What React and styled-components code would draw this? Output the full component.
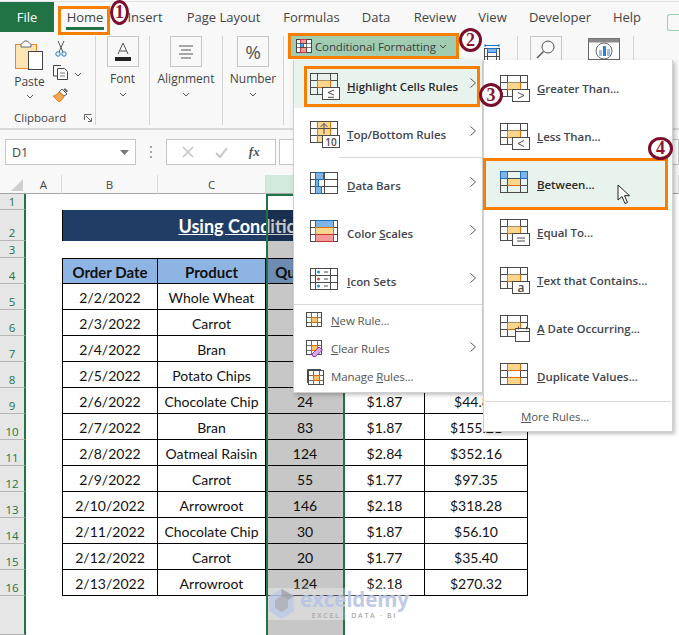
import React from 'react';
import styled, { createGlobalStyle } from 'styled-components';

const Global = createGlobalStyle`
  html, body { margin: 0; padding: 0; background: #fff; overflow: hidden; }
  body { font-family: "Open Sans", "Noto Sans", sans-serif; color: #444; }
`;

const Page = styled.div`
  position: relative;
  width: 679px;
  height: 635px;
  overflow: hidden;
  display: flex;
  flex-direction: column;
  background: #f8f8f8;
`;

/* ---- tabs ---- */
const TabBar = styled.div`
  height: 30px;
  border-top: 1px solid #e2e2e2;
  margin-top: 1px;
  display: flex;
  flex: none;
`;
const Tab = styled.div`
  position: relative;
  width: ${p => p.$w}px;
  font-size: 13px;
  display: flex;
  align-items: center;
  justify-content: center;
  color: #444;
  white-space: nowrap;
  ${p => p.$file && 'background:#217346;color:#fff;'}
  ${p => p.$active && `
    &::after {
      content: '';
      position: absolute;
      left: 12px;
      right: 12px;
      bottom: 2px;
      height: 3px;
      background: #217346;
    }
  `}
`;
const ShareStub = styled.div`
  width: 11px;
  height: 15px;
  margin: 12px 0 0 auto;
  border: 1px solid #9fcdb3;
  border-right: none;
  border-radius: 3px 0 0 3px;
`;

/* ---- ribbon ---- */
const Ribbon = styled.div`
  height: 98px;
  flex: none;
  display: flex;
  border-bottom: 2px solid #d9d9d9;
  box-sizing: border-box;
  padding-bottom: 3px;
`;
const Group = styled.div`
  width: ${p => p.$w}px;
  flex: none;
  box-sizing: border-box;
  margin-top: 4px;
  border-right: 1px solid #d4d4d4;
  display: flex;
  flex-direction: column;
  align-items: center;
  font-size: 12px;
  color: #444;
`;
const BoxIcon = styled.div`
  width: 32px;
  height: ${p => p.$h || 31}px;
  flex: none;
  box-sizing: border-box;
  border: 1px solid #c6c6c6;
  display: flex;
  align-items: center;
  justify-content: center;
  margin-bottom: 3px;
`;
const Percent = styled.span`
  font-size: 19px;
  color: #555;
`;
const Chevron = styled.svg`
  width: 8px;
  height: 5px;
  margin-top: ${p => (p.$flat ? 0 : 5)}px;
  flex: none;
`;
const ClipTop = styled.div`
  display: flex;
  width: 100%;
  padding: 4px 0 0 15px;
  box-sizing: border-box;
  gap: 8px;
`;
const PasteCol = styled.div`
  display: flex;
  flex-direction: column;
  align-items: center;
  width: 29px;
  font-size: 12px;
  line-height: 14px;
`;
const PasteLabel = styled.span`
  margin-top: 5px;
`;
const ClipTools = styled.div`
  display: flex;
  flex-direction: column;
  gap: 7px;
`;
const ToolRow = styled.div`
  display: flex;
  align-items: center;
  gap: 5px;
  padding-left: ${p => p.$indent || 0}px;
`;
const GroupLabel = styled.div`
  margin-top: 7px;
  width: 100%;
  display: flex;
  justify-content: space-between;
  align-items: center;
  box-sizing: border-box;
  padding: 0 3px 0 14px;
  font-size: 11.5px;
  line-height: 15px;
`;
const CondButton = styled.div`
  width: 170px;
  height: 20px;
  margin: 4px 0 0 5px;
  flex: none;
  background: #a0cdb2;
  display: flex;
  align-items: center;
  gap: 3px;
  padding-left: 7px;
  box-sizing: border-box;
  font-size: 11.5px;
  letter-spacing: -0.12px;
  white-space: nowrap;
  color: #3d3d3d;
`;
const RightTools = styled.div`
  flex: 1;
  display: flex;
  height: 88px;
  margin-top: 4px;
  padding-left: 25px;
`;
const SideTool = styled.div`
  width: ${p => p.$w}px;
  height: 88px;
  flex: none;
  box-sizing: border-box;
  border-right: 1px solid #d4d4d4;
  padding-top: ${p => p.$top}px;
  padding-left: ${p => p.$left}px;
  display: flex;
  align-items: flex-start;
  gap: 26px;
`;
const AnalyzeWrap = styled.div`
  margin-top: 2px;
  line-height: 0;
`;

/* ---- formula bar ---- */
const FormulaBar = styled.div`
  height: 45px;
  flex: none;
  box-sizing: border-box;
  padding-top: 9px;
  display: flex;
  align-items: flex-start;
  padding-left: 5px;
`;
const NameBox = styled.div`
  width: 131px;
  height: 26px;
  box-sizing: border-box;
  border: 1px solid #c6c6c6;
  background: #fff;
  display: flex;
  align-items: center;
  justify-content: space-between;
  padding: 0 6px;
  font-size: 12.5px;
`;
const Dots = styled.div`
  width: 30px;
  height: 26px;
  display: flex;
  flex-direction: column;
  align-items: center;
  justify-content: center;
  gap: 3px;
  & > i { width: 2px; height: 2px; background: #a8a8a8; display: block; }
`;
const FxBox = styled.div`
  width: 110px;
  height: 26px;
  box-sizing: border-box;
  border: 1px solid #c6c6c6;
  background: #fff;
  display: flex;
  align-items: center;
  justify-content: space-around;
  padding: 0 5px;
`;
const FxText = styled.span`
  font-family: "Liberation Serif", serif;
  font-style: italic;
  font-weight: 700;
  font-size: 13px;
  color: #555;
`;
const FormulaInput = styled.div`
  flex: 1;
  height: 26px;
  margin-left: 3px;
  box-sizing: border-box;
  border: 1px solid #c6c6c6;
  background: #fff;
`;

/* ---- sheet ---- */
const Sheet = styled.div`
  position: relative;
  flex: 1;
  display: grid;
  grid-template-columns: 26px 36px 96px 108px 79px 80px 103px 1fr;
  grid-template-rows: 19px 16px 31px 17px 26px repeat(12, 26px) 1fr;
  background: #fff;
  font-family: Lato, "Liberation Sans", sans-serif;
  font-size: 14px;
  color: #111;
`;
const Corner = styled.div`
  background: #f8f8f8;
  border-bottom: 1px solid #a6a6a6;
  position: relative;
  &::after {
    content: '';
    position: absolute;
    right: 3px;
    bottom: 2px;
    border-style: solid;
    border-width: 0 0 12px 12px;
    border-color: transparent transparent #cfcfcf transparent;
  }
`;
const ColHead = styled.div`
  background: ${p => (p.$on ? '#d2eadd' : '#f8f8f8')};
  border-right: 1px solid #d9d9d9;
  border-bottom: 1px solid #a6a6a6;
  display: flex;
  align-items: center;
  justify-content: center;
  font-family: "Open Sans", sans-serif;
  font-size: 11.5px;
  color: #444;
`;
const RowHead = styled.div`
  background: #e6e6e6;
  border-right: 2px solid #217346;
  border-bottom: 1px solid #b5b5b5;
  box-sizing: border-box;
  display: flex;
  align-items: flex-end;
  justify-content: center;
  font-family: "Open Sans", sans-serif;
  font-size: 11.5px;
  line-height: 15px;
  color: #217346;
`;
const Blank = styled.div``;
const TitleCell = styled.div`
  grid-column: 3 / 8;
  background: #203d66;
  border-left: 1px solid #000;
  color: #fff;
  font-size: 18px;
  font-weight: 700;
  text-decoration: underline;
  display: flex;
  align-items: center;
  justify-content: center;
  white-space: nowrap;
`;
const Cell = styled.div`
  box-sizing: border-box;
  border-right: 1px solid #000;
  border-bottom: 1px solid #000;
  padding-top: 1px;
  ${p => p.$first && 'border-left: 1px solid #000;'}
  ${p => p.$head && 'border-top: 1px solid #000; background:#8eb4e3; font-weight:700; font-size:15px;'}
  display: flex;
  align-items: center;
  justify-content: center;
  white-space: nowrap;
  overflow: hidden;
`;
const ColumnSelection = styled.div`
  position: absolute;
  left: 266px;
  width: 79px;
  top: 19px;
  bottom: 0;
  box-sizing: border-box;
  border: 2px solid #217346;
  border-bottom: none;
  &::after {
    content: '';
    position: absolute;
    left: 0;
    right: 0;
    top: 14px;
    bottom: 0;
    background: rgba(0, 0, 0, 0.22);
  }
`;
const Watermark = styled.div`
  position: absolute;
  left: 268px;
  top: 413px;
  width: 142px;
  height: 32px;
  background: rgba(255, 255, 255, 0.3);
  display: flex;
  gap: 5px;
`;
const MarkText = styled.div`
  display: flex;
  flex-direction: column;
  align-items: center;
  font-family: "Open Sans", sans-serif;
`;
const MarkName = styled.div`
  font-size: 20.5px;
  line-height: 23px;
  font-weight: 700;
  letter-spacing: -0.1px;
  color: #b7c5e6;
  opacity: 0.9;
`;
const MarkSub = styled.div`
  font-size: 7px;
  line-height: 9px;
  font-weight: 600;
  letter-spacing: 1.7px;
  color: #a9a9a9;
`;

/* ---- menus ---- */
const Menu = styled.div`
  position: absolute;
  left: ${p => p.$x}px;
  top: 60px;
  width: 190px;
  box-sizing: border-box;
  background: #fff;
  border: 1px solid #d0d0d0;
  border-top: none;
  box-shadow: 2px 2px 4px rgba(0, 0, 0, 0.25);
  padding: ${p => p.$pad}px 0 ${p => (p.$pad ? 1 : 2)}px;
  font-size: 11.5px;
  color: #444;
`;
const BigItem = styled.div`
  height: 48px;
  box-sizing: border-box;
  padding: ${p => (p.$sub ? 0 : 6)}px 0 0 16px;
  margin-right: ${p => (p.$sub ? 5 : 0)}px;
  display: flex;
  align-items: center;
  position: relative;
  font-weight: 600;
  letter-spacing: -0.05px;
  white-space: nowrap;
  color: #3f4650;
  background: ${p => (p.$on ? '#e9f3ee' : 'transparent')};
  ${p => p.$on && 'color:#2b2b2b;'}
  & > svg { flex: none; margin-right: 6px; }
  & > span { margin-top: -1px; }
`;
const SmallItem = styled.div`
  height: 28px;
  box-sizing: border-box;
  padding-left: 12px;
  display: flex;
  align-items: center;
  position: relative;
  white-space: nowrap;
  letter-spacing: -0.1px;
  color: #555;
  & > svg { flex: none; margin-right: 7px; }
`;
const Arrow = styled.svg`
  position: absolute;
  right: 6px;
  top: 50%;
  margin-top: -6px;
  width: 6px;
  height: 10px;
  &&& { margin-right: 0; }
`;
const Sep = styled.div`
  height: 1px;
  background: #d9d9d9;
  margin: ${p => p.$m || '0'};
`;
const MoreRules = styled.div`
  height: 28px;
  display: flex;
  align-items: center;
  padding-left: 37px;
  letter-spacing: -0.1px;
  color: #555;
`;
const Key = styled.span`
  text-decoration: underline;
`;

/* ---- annotations ---- */
const Callout = styled.div`
  position: absolute;
  left: ${p => p.$x}px;
  top: ${p => p.$y}px;
  width: ${p => p.$w}px;
  height: ${p => p.$h}px;
  box-sizing: border-box;
  border: 3px solid #f77f00;
  pointer-events: none;
`;
const Badge = styled.div`
  position: absolute;
  left: ${p => p.$x}px;
  top: ${p => p.$y}px;
  width: ${p => p.$w}px;
  height: ${p => p.$h}px;
  box-sizing: border-box;
  border-radius: 50%;
  border: 3px solid #7b0f2b;
  background: #fff;
  color: #8d1230;
  font-family: "Liberation Serif", serif;
  font-weight: 700;
  font-size: 18px;
  display: flex;
  align-items: center;
  justify-content: center;
`;
const Cursor = styled.svg`
  position: absolute;
  left: 617px;
  top: 184px;
`;

/* ---- icons ---- */
const INK = '#4a4a4a';
const OR = '#e26b0a';
const YL = '#fbd78d';
const BL = '#7fb5e6';
const BLD = '#1f6fc0';

const GridLines = ({ v = [7, 20], h = [7, 14] }) => (
  <>
    <rect x="0.5" y="0.5" width="27" height="21" fill="none" stroke={INK} />
    {v.map(x => <path key={x} d={`M${x + 0.5} 0.5V21.5`} stroke={INK} fill="none" />)}
    {h.map(y => <path key={y} d={`M0.5 ${y + 0.5}H27.5`} stroke={INK} fill="none" />)}
  </>
);

const HiliteCell = () => (
  <>
    <rect x="7.5" y="7.5" width="13" height="7" fill={YL} />
    <path d="M7.5 14.5H20.5V7.5" stroke={OR} fill="none" />
  </>
);

const SubBox = ({ children }) => (
  <>
    <rect x="12.5" y="14.5" width="17" height="12" fill="#fff" stroke={INK} />
    {children}
  </>
);

const MenuIcon = ({ kind }) => {
  const glyphs = {
    lte: <path d="M24 17l-6 2.5 6 2.5M18 24.3h6" stroke={INK} fill="none" />,
    gt: <path d="M18 17.5l6 3-6 3" stroke={INK} fill="none" />,
    lt: <path d="M24 17.5l-6 3 6 3" stroke={INK} fill="none" />,
    eq: <path d="M17 19h8M17 22h8" stroke={INK} fill="none" />,
  };
  let body;
  if (kind === 'top') {
    body = (
      <>
        <rect x="7.5" y="0.5" width="13" height="21" fill={YL} />
        <GridLines />
        <path d="M7.5 0.5V21.5M20.5 0.5V21.5" stroke={OR} />
        <path d="M14 13V2.5M10.5 6l3.5-3.5L17.5 6" stroke={INK} fill="none" />
        <SubBox><text x="21" y="24.5" fontSize="10" fontFamily="Open Sans" fill={INK} textAnchor="middle">10</text></SubBox>
      </>
    );
  } else if (kind === 'bars') {
    body = (
      <>
        <GridLines v={[5, 14]} />
        <rect x="5.5" y="0.5" width="8" height="7" fill={BL} stroke={BLD} />
        <rect x="5.5" y="7.5" width="3" height="7" fill={BL} stroke={BLD} />
        <rect x="5.5" y="14.5" width="6" height="7" fill={BL} stroke={BLD} />
      </>
    );
  } else if (kind === 'scales') {
    body = (
      <>
        <GridLines v={[5, 23]} />
        <rect x="5.5" y="0.5" width="18" height="7" fill={BL} stroke={BLD} />
        <rect x="5.5" y="7.5" width="18" height="7" fill={YL} stroke={OR} />
        <rect x="5.5" y="14.5" width="18" height="7" fill="#f49a9a" stroke="#d13438" />
      </>
    );
  } else if (kind === 'icons') {
    body = (
      <>
        <GridLines v={[5, 20]} />
        <circle cx="8.5" cy="4" r="1.5" fill="#1f8fe0" />
        <circle cx="8.5" cy="11" r="1.5" fill="#e8454a" />
        <circle cx="8.5" cy="18" r="1.5" fill="#1f8fe0" />
        <path d="M14 4h4M14 11h4M14 18h4" stroke={INK} />
      </>
    );
  } else if (kind === 'between') {
    body = (
      <>
        <rect x="0.5" y="0.5" width="7" height="7" fill={BL} />
        <rect x="20.5" y="0.5" width="7" height="7" fill={BL} />
        <HiliteCell />
        <GridLines />
        <path d="M0.5 7.5V0.5H7.5V7.5ZM20.5 7.5V0.5H27.5V7.5Z" stroke={BLD} fill="none" />
        <path d="M7.5 14.5H20.5" stroke={OR} />
      </>
    );
  } else if (kind === 'dup') {
    body = (
      <>
        <rect x="7.5" y="0.5" width="13" height="7" fill={YL} />
        <rect x="7.5" y="14.5" width="13" height="7" fill={YL} />
        <GridLines />
        <path d="M7.5 0.5V7.5M20.5 0.5V7.5M7.5 14.5V21.5M20.5 14.5V21.5M7.5 14.5H20.5M7.5 7.5H20.5" stroke={OR} fill="none" />
      </>
    );
  } else if (kind === 'date') {
    body = (
      <>
        <GridLines />
        <HiliteCell />
        <rect x="15.5" y="13.5" width="14" height="13" fill="#fff" stroke={INK} />
        <path d="M15.5 16.5H29.5M18.5 11.5V14.5M26.5 11.5V14.5" stroke={INK} fill="none" />
      </>
    );
  } else if (kind === 'text') {
    body = (
      <>
        <GridLines />
        <HiliteCell />
        <SubBox><text x="21" y="24.5" fontSize="12" fontFamily="Open Sans" fill={INK} textAnchor="middle">a</text></SubBox>
      </>
    );
  } else {
    body = (
      <>
        <GridLines />
        <HiliteCell />
        <SubBox>{glyphs[kind]}</SubBox>
      </>
    );
  }
  return <svg width="31" height="28" viewBox="0 0 31 28">{body}</svg>;
};

const SmallGrid = ({ kind }) => (
  <svg width="18" height="17" viewBox="0 0 18 17">
    {kind === 'manage' && <path d="M1.5 15V1.5H15" stroke={INK} fill="none" />}
    <g transform={kind === 'manage' ? 'translate(2.5 2.5)' : 'translate(0.5 0.5)'}>
      <rect x="0" y="0" width="15" height="14" fill="none" stroke={INK} />
      <path d="M5 0V14M11 0V14M0 5H15M0 10H15" stroke={INK} fill="none" opacity="0.8" />
      <rect x="5" y="5" width="6" height="5" fill="#fcc266" stroke={OR} />
    </g>
    {kind === 'clear' && <path d="M6 14l7-7 3.5 3-7 6.5h-2.5z" fill="#d9a6e8" stroke="#8a3ea8" />}
  </svg>
);

const MenuArrow = () => (
  <Arrow viewBox="0 0 6 10"><path d="M0.5 0.5L5.5 5 0.5 9.5" stroke="#555" fill="none" /></Arrow>
);

const Down = () => (
  <Chevron viewBox="0 0 8 5"><path d="M1 1l3 3 3-3" stroke="#555" fill="none" /></Chevron>
);

const PasteIcon = () => (
  <svg width="29" height="30" viewBox="0 0 29 30">
    <rect x="0.5" y="4.5" width="21" height="24" fill="#fde4b4" stroke="#e8872b" />
    <path d="M6 4.5c0-1.5 3-1.5 3.5-3.5h3C13 3 16 3 16 4.5V7H6z" fill="#fff" stroke="#666" />
    <rect x="13.5" y="11.5" width="14" height="18" fill="#fff" stroke="#444" />
  </svg>
);

const ScissorsIcon = () => (
  <svg width="12" height="17" viewBox="0 0 12 17">
    <path d="M3 1l5 11M9 1L4 12" stroke="#555" fill="none" />
    <circle cx="3" cy="14" r="2.2" fill="none" stroke="#1f77c9" />
    <circle cx="9" cy="14" r="2.2" fill="none" stroke="#1f77c9" />
  </svg>
);

const CopyIcon = () => (
  <svg width="17" height="16" viewBox="0 0 17 16">
    <path d="M9 1.5H1.5V12H5" stroke="#444" fill="none" />
    <path d="M5.5 4.5h7l3 3v8h-10z" fill="#fff" stroke="#444" />
    <path d="M8 9h5M8 12h5" stroke="#777" />
  </svg>
);

const BrushIcon = () => (
  <svg width="17" height="16" viewBox="0 0 17 16">
    <path d="M10 2l5 5-3 2-5-4z" fill="#fff" stroke="#555" />
    <path d="M13 1l3 3-1.5 1.5-3-3z" fill="#666" />
    <path d="M7 5l5 4c-1 3-3 5-5 6L1 9c2 0 4-2 6-4z" fill="#f3a94d" stroke="#e07a1c" />
  </svg>
);

const CondIcon = () => (
  <svg width="16" height="14" viewBox="0 0 16 14">
    <rect x="0.5" y="0.5" width="15" height="13" fill="#fff" stroke="#444" />
    <rect x="4.5" y="0.5" width="6" height="4" fill="#f49a9a" stroke="#d13438" />
    <rect x="4.5" y="4.5" width="3" height="4" fill="#5aa6e6" stroke="#1f6fc0" />
    <rect x="4.5" y="8.5" width="6" height="5" fill="#f49a9a" stroke="#d13438" />
    <path d="M10.5 0.5V13.5M0.5 4.5H15.5M0.5 8.5H15.5" stroke="#444" fill="none" opacity="0.7" />
  </svg>
);

const TableIcon = () => (
  <svg width="16" height="17" viewBox="0 0 16 17">
    <path d="M1 1.5H15M1 0V3M15 0V3" stroke={BLD} fill="none" />
    <rect x="0.5" y="4.5" width="15" height="12" fill="none" stroke={INK} />
    <rect x="3.5" y="4.5" width="9" height="4" fill={BL} stroke={BLD} />
    <path d="M3.5 8.5V16.5M12.5 8.5V16.5M0.5 12.5H15.5" stroke={INK} fill="none" />
  </svg>
);

const SearchIcon = () => (
  <svg width="20" height="20" viewBox="0 0 20 20">
    <circle cx="12" cy="8" r="6" fill="none" stroke="#555" />
    <path d="M7.5 12.5L1 19" stroke="#555" strokeWidth="1.5" />
  </svg>
);

const AnalyzeIcon = () => (
  <svg width="32" height="22" viewBox="0 0 32 22">
    <rect x="0.5" y="0.5" width="31" height="21" fill="#fff" stroke="#666" />
    <rect x="0.5" y="0.5" width="31" height="4" fill="#888" />
    <circle cx="16" cy="13" r="8" fill="none" stroke="#666" />
    <rect x="11" y="12" width="3" height="6" fill="#9cc4ea" />
    <rect x="15" y="8" width="3" height="10" fill="#2f80d0" />
    <rect x="19" y="11" width="3" height="7" fill="#9cc4ea" />
  </svg>
);

const MarkLogo = () => (
  <svg width="27" height="32" viewBox="0 0 27 32">
    <path d="M13.5 1L26 8v15l-12.5 8L1 23V8z" fill="#bccbe8" opacity="0.8" />
    <path d="M13.5 8L20 12v8l-6.5 4L7 20v-8z" fill="#a9a9a9" opacity="0.7" />
    <path d="M13.5 1L26 8l-6 4-6.5-4z" fill="#9a9a9a" opacity="0.7" />
  </svg>
);

const COLS = ['A', 'B', 'C', 'D', 'E', 'F'];

const DATA = [
  ['2/2/2022', 'Whole Wheat'],
  ['2/3/2022', 'Carrot'],
  ['2/4/2022', 'Bran'],
  ['2/5/2022', 'Potato Chips'],
  ['2/6/2022', 'Chocolate Chip', '24', '$1.87', '$44.88'],
  ['2/7/2022', 'Bran', '83', '$1.87', '$155.21'],
  ['2/8/2022', 'Oatmeal Raisin', '124', '$2.84', '$352.16'],
  ['2/9/2022', 'Carrot', '55', '$1.77', '$97.35'],
  ['2/10/2022', 'Arrowroot', '146', '$2.18', '$318.28'],
  ['2/11/2022', 'Chocolate Chip', '30', '$1.87', '$56.10'],
  ['2/12/2022', 'Carrot', '20', '$1.77', '$35.40'],
  ['2/13/2022', 'Arrowroot', '124', '$2.18', '$270.32'],
];

const HEAD = ['Order Date', 'Product', 'Quantity', '', ''];

const Row = ({ n, cells, head }) => (
  <>
    <RowHead>{n}</RowHead>
    <Blank />
    {cells.map((c, i) => (
      <Cell key={i} $first={i === 0} $head={head}>{c}</Cell>
    ))}
    <Blank />
  </>
);

const EmptyRow = ({ n }) => (
  <>
    <RowHead>{n}</RowHead>
    {[0, 1, 2, 3, 4, 5, 6].map(i => <Blank key={i} />)}
  </>
);

export default function App() {
  return (
    <Page>
      <Global />
      <TabBar>
        <Tab $file $w={54}>File</Tab>
        <Tab $active $w={62}>Home</Tab>
        <Tab $w={58}>Insert</Tab>
        <Tab $w={99}>Page Layout</Tab>
        <Tab $w={77}>Formulas</Tab>
        <Tab $w={52}>Data</Tab>
        <Tab $w={66}>Review</Tab>
        <Tab $w={49}>View</Tab>
        <Tab $w={86}>Developer</Tab>
        <Tab $w={48}>Help</Tab>
        <ShareStub />
      </TabBar>
      <Ribbon>
        <Group $w={96}>
          <ClipTop>
            <PasteCol>
              <PasteIcon />
              <PasteLabel>Paste</PasteLabel>
              <Down />
            </PasteCol>
            <ClipTools>
              <ToolRow $indent={3}><ScissorsIcon /></ToolRow>
              <ToolRow><CopyIcon /><Down /></ToolRow>
              <ToolRow><BrushIcon /></ToolRow>
            </ClipTools>
          </ClipTop>
          <GroupLabel>
            Clipboard
            <svg width="8" height="8" viewBox="0 0 8 8"><path d="M0.5 6V0.5H7.5M2 2l5 5M4 7.5h3.5V4" stroke="#666" fill="none" /></svg>
          </GroupLabel>
        </Group>
        <Group $w={54}>
          <BoxIcon>
            <svg width="18" height="20" viewBox="0 0 18 20">
              <path d="M4 12L9 1l5 11M5.5 9h7" stroke="#555" fill="none" />
              <rect x="1" y="15" width="16" height="4" fill="#222" />
            </svg>
          </BoxIcon>
          Font
          <Down />
        </Group>
        <Group $w={73}>
          <BoxIcon>
            <svg width="16" height="14" viewBox="0 0 16 14"><path d="M1 1h14M3 5h10M1 9h14M3 13h10" stroke="#555" /></svg>
          </BoxIcon>
          Alignment
          <Down />
        </Group>
        <Group $w={61}>
          <BoxIcon><Percent>%</Percent></BoxIcon>
          Number
          <Down />
        </Group>
        <CondButton>
          <CondIcon />
          Conditional Formatting
          <Chevron $flat viewBox="0 0 8 5"><path d="M1 1l3 3 3-3" stroke="#444" fill="none" /></Chevron>
        </CondButton>
        <RightTools>
          <SideTool $w={34} $top={8} $left={0}><TableIcon /></SideTool>
          <SideTool $w={116} $top={0} $left={12}>
            <BoxIcon $h={26}><SearchIcon /></BoxIcon>
            <AnalyzeWrap><AnalyzeIcon /></AnalyzeWrap>
          </SideTool>
        </RightTools>
      </Ribbon>
      <FormulaBar>
        <NameBox>
          D1
          <svg width="9" height="5" viewBox="0 0 9 5"><path d="M0 0h9L4.5 5z" fill="#777" /></svg>
        </NameBox>
        <Dots><i /><i /><i /></Dots>
        <FxBox>
          <svg width="12" height="12" viewBox="0 0 12 12"><path d="M1 1l10 10M11 1L1 11" stroke="#c6c6c6" strokeWidth="1.6" /></svg>
          <svg width="13" height="12" viewBox="0 0 13 12"><path d="M1 7l4 4 7-9" stroke="#c6c6c6" strokeWidth="2" fill="none" /></svg>
          <FxText>fx</FxText>
        </FxBox>
        <FormulaInput />
      </FormulaBar>
      <Sheet>
        <Corner />
        {COLS.map(c => <ColHead key={c} $on={c === 'D'}>{c}</ColHead>)}
        <ColHead />
        <EmptyRow n="1" />
        <RowHead>2</RowHead>
        <Blank />
        <TitleCell>Using Conditional Formatting</TitleCell>
        <Blank />
        <EmptyRow n="3" />
        <Row n="4" cells={HEAD} head />
        {DATA.map((d, i) => (
          <Row key={d[0]} n={String(i + 5)} cells={[d[0], d[1], d[2] || '', d[3] || '', d[4] || '']} />
        ))}
        <EmptyRow n="" />
        <ColumnSelection />
        <Watermark>
          <MarkLogo />
          <MarkText>
            <MarkName>exceldemy</MarkName>
            <MarkSub>EXCEL · DATA · BI</MarkSub>
          </MarkText>
        </Watermark>
      </Sheet>

      <Menu $x={293} $pad={0}>
        <BigItem $on><MenuIcon kind="lte" /><span><Key>H</Key>ighlight Cells Rules</span><MenuArrow /></BigItem>
        <BigItem><MenuIcon kind="top" /><span><Key>T</Key>op/Bottom Rules</span><MenuArrow /></BigItem>
        <Sep $m="1px 0 1px 45px" />
        <BigItem><MenuIcon kind="bars" /><span><Key>D</Key>ata Bars</span><MenuArrow /></BigItem>
        <BigItem><MenuIcon kind="scales" /><span>Color <Key>S</Key>cales</span><MenuArrow /></BigItem>
        <BigItem><MenuIcon kind="icons" /><span><Key>I</Key>con Sets</span><MenuArrow /></BigItem>
        <Sep $m="1px 0 1px" />
        <SmallItem><SmallGrid /><span><Key>N</Key>ew Rule...</span></SmallItem>
        <SmallItem><SmallGrid kind="clear" /><span><Key>C</Key>lear Rules</span><MenuArrow /></SmallItem>
        <SmallItem><SmallGrid kind="manage" /><span>Manage <Key>R</Key>ules...</span></SmallItem>
      </Menu>

      <Menu $x={483} $pad={5}>
        <BigItem $sub><MenuIcon kind="gt" /><span><Key>G</Key>reater Than...</span></BigItem>
        <BigItem $sub><MenuIcon kind="lt" /><span><Key>L</Key>ess Than...</span></BigItem>
        <BigItem $sub $on><MenuIcon kind="between" /><span><Key>B</Key>etween...</span></BigItem>
        <BigItem $sub><MenuIcon kind="eq" /><span><Key>E</Key>qual To...</span></BigItem>
        <BigItem $sub><MenuIcon kind="text" /><span><Key>T</Key>ext that Contains...</span></BigItem>
        <BigItem $sub><MenuIcon kind="date" /><span><Key>A</Key> Date Occurring...</span></BigItem>
        <BigItem $sub><MenuIcon kind="dup" /><span><Key>D</Key>uplicate Values...</span></BigItem>
        <Sep $m="0 1px" />
        <MoreRules><span><Key>M</Key>ore Rules...</span></MoreRules>
      </Menu>

      <Callout $x={58} $y={6} $w={52} $h={29} />
      <Callout $x={288} $y={33} $w={171} $h={26} />
      <Callout $x={304} $y={66} $w={176} $h={41} />
      <Callout $x={483} $y={158} $w={185} $h={52} />

      <Badge $x={110} $y={0} $w={19} $h={25}>1</Badge>
      <Badge $x={459} $y={28} $w={23} $h={24}>2</Badge>
      <Badge $x={479} $y={83} $w={24} $h={24}>3</Badge>
      <Badge $x={648} $y={137} $w={25} $h={23}>4</Badge>

      <Cursor width="14" height="21" viewBox="0 0 14 21">
        <path d="M1 1v15l4-3.5 3 7 2.5-1-3-6.8h5z" fill="#fff" stroke="#222" />
      </Cursor>
    </Page>
  );
}
